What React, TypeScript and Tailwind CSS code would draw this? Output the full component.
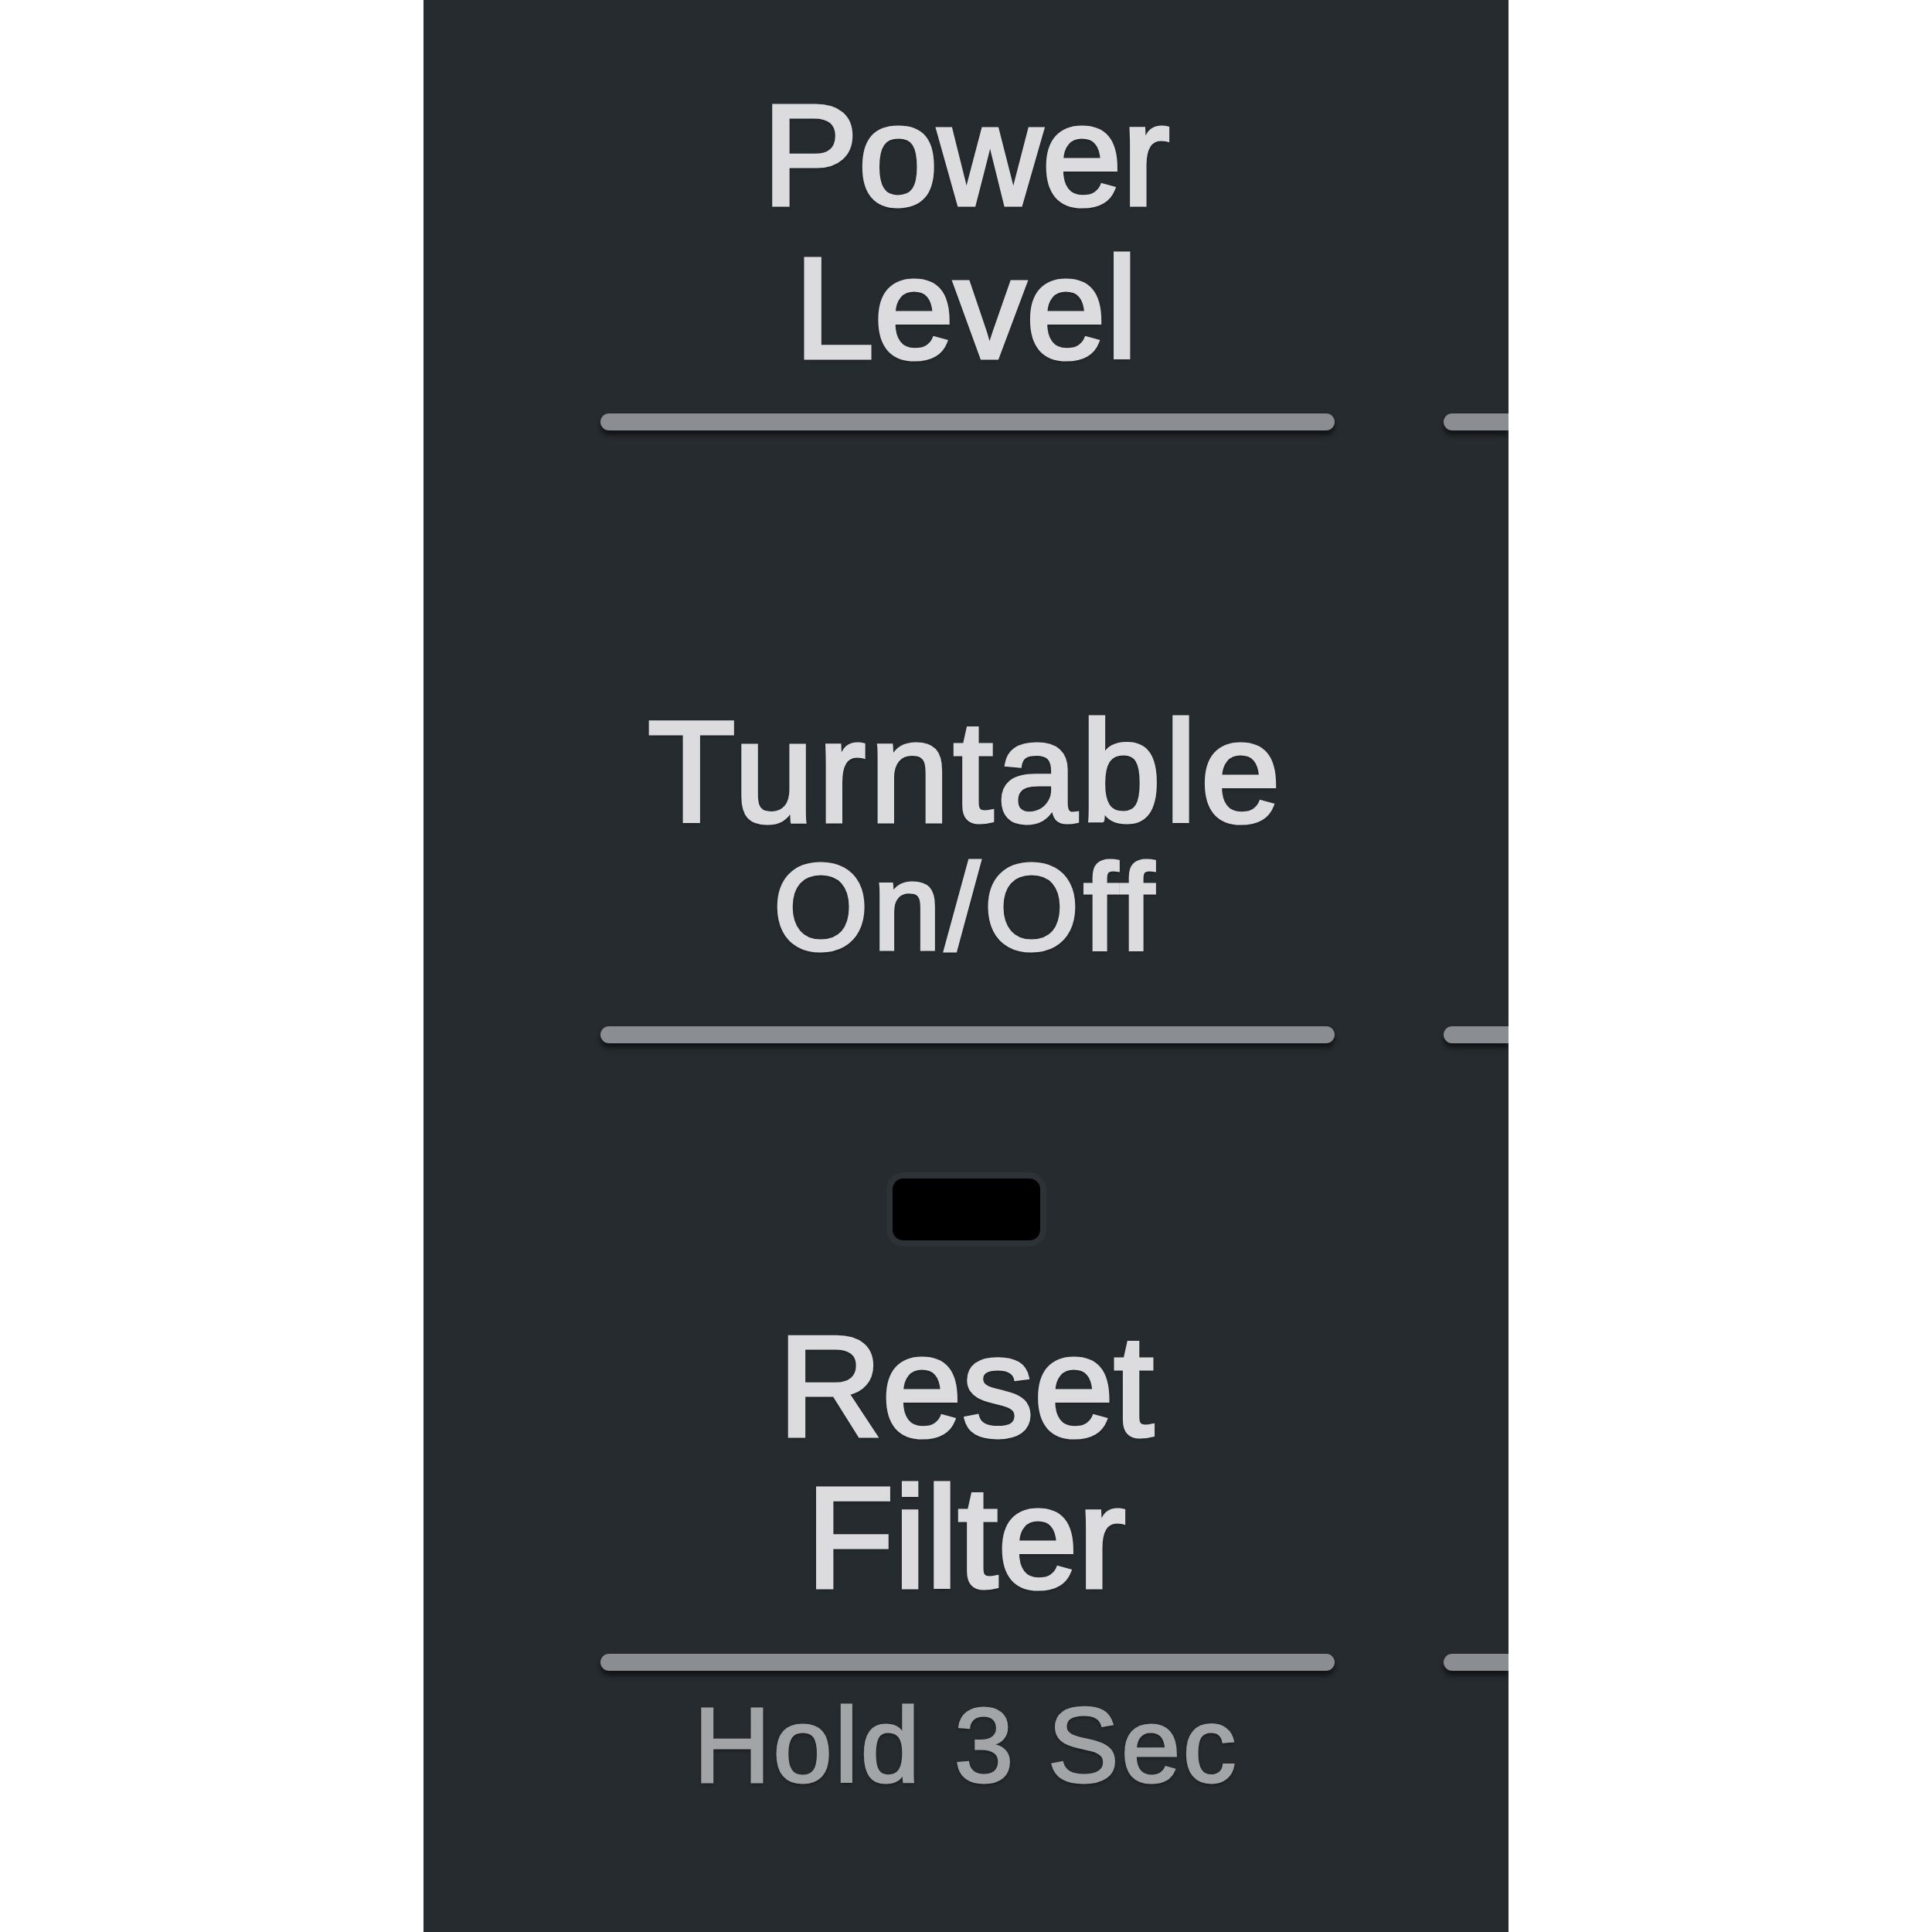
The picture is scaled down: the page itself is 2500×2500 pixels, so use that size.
import React from "react";

// Divider rail: a long centered bar plus the start of the next column's bar
const Rail = ({ className = "" }: { className?: string }) => (
  <div className={`flex items-center pl-[229px] gap-[141px] ${className}`}>
    <div className="w-[950px] h-[22px] rounded-full bg-[#8a8d91] shadow-[0_6px_6px_rgba(0,0,0,0.55)]" />
    <div className="flex-1 h-[22px] rounded-l-full bg-[#8a8d91] shadow-[0_6px_6px_rgba(0,0,0,0.55)]" />
  </div>
);

const label =
  "text-[#dcdcdf] [text-shadow:0_2px_5px_rgba(0,0,0,0.6)] [-webkit-text-stroke:5px_#dcdcdf] [font-variant-ligatures:none]";

const App: React.FC = () => {
  return (
    <div className="w-[2500px] h-[2500px] bg-white overflow-hidden">
      <div
        className="ml-[548px] w-[1404px] h-[2500px] bg-[#252b2f] overflow-hidden flex flex-col text-center"
        style={{ fontFamily: '"Liberation Sans", Arial, sans-serif' }}
      >
        {/* POWER LEVEL */}
        <div className={`mt-[102px] text-[186px] leading-[198px] ${label}`}>
          <div>Power</div>
          <div>Level</div>
        </div>
        <Rail className="mt-[37px]" />

        {/* TURNTABLE */}
        <div className={`mt-[349px] text-[186px] leading-[186px] tracking-[5px] ${label}`}>Turntable</div>
        <div className={`mt-[3px] text-[158px] leading-[156px] tracking-[6px] ${label}`}>On/Off</div>
        <Rail className="mt-[77px]" />

        {/* RESET FILTER */}
        <div className="mt-[175px] flex justify-center">
          <div className="w-[191px] h-[80px] rounded-[14px] bg-black shadow-[0_0_0_8px_#2c3236]" />
        </div>
        <div className={`mt-[91px] text-[186px] leading-[196px] ${label}`}>
          <div>Reset</div>
          <div>Filter</div>
        </div>
        <Rail className="mt-[52px]" />
        <div className="mt-[27px] text-[138px] leading-[138px] tracking-[3px] text-[#a2a5a8] [text-shadow:0_2px_5px_rgba(0,0,0,0.6)] [-webkit-text-stroke:3px_#a2a5a8]">
          Hold 3 Sec
        </div>
      </div>
    </div>
  );
};

export default App;
